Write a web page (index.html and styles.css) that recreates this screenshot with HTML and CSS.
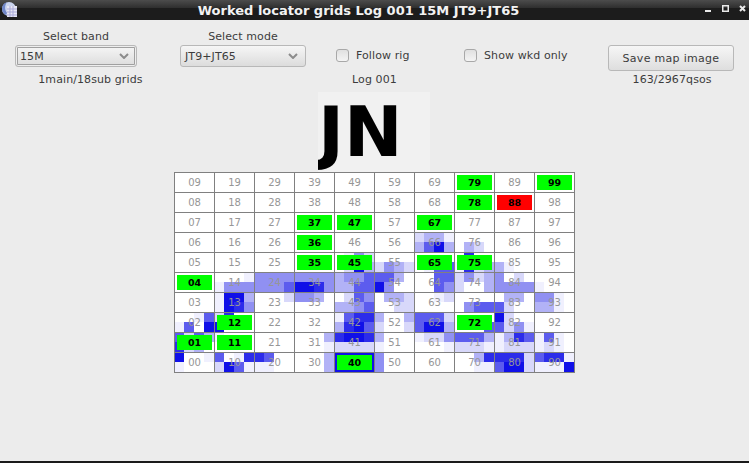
FILE: index.html
```html
<!DOCTYPE html>
<html lang="en">
<head>
    <meta charset="UTF-8">
    <title>Worked locator grids</title>
    <link rel="stylesheet" href="styles.css">
</head>
<body>
    <header class="titlebar">
        <svg class="app-icon" width="16" height="16" viewBox="0 0 16 16">
            <circle cx="8" cy="8" r="7" fill="#c9d3ee"/>
            <path d="M1 8a7 7 0 0 1 5-6.7C4 4 3 8 6 12l-1 2A7 7 0 0 1 1 8z" fill="#6f86c8"/>
            <rect x="6" y="5" width="10" height="11" fill="#e6e6f4"/>
            <path d="M6 8h10M6 11h10M6 14h10M9 5v11M12 5v11" stroke="#a9a9d8" stroke-width="1"/>
        </svg>
        <span class="title">Worked locator grids Log 001 15M JT9+JT65</span>
        <div class="win-buttons">
            <svg width="7" height="7" viewBox="0 0 7 7"><rect x="0" y="5" width="6" height="2" fill="#e8e8e8"/></svg>
            <svg width="7" height="7" viewBox="0 0 7 7"><rect x="0.75" y="0.75" width="5.5" height="5.5" fill="none" stroke="#e8e8e8" stroke-width="1.5"/></svg>
            <svg width="7" height="7" viewBox="0 0 7 7"><path d="M1 1l5 5M6 1l-5 5" stroke="#e8e8e8" stroke-width="2"/></svg>
        </div>
    </header>

    <main class="content">
        <section class="controls">
            <div class="col col-band">
                <label class="caption">Select band</label>
                <div class="combo combo-focus">
                    <span>15M</span>
                    <svg width="10" height="6" viewBox="0 0 10 6"><path d="M1 1l4 4 4-4" fill="none" stroke="#8c8c8c" stroke-width="2"/></svg>
                </div>
            </div>
            <div class="col col-mode">
                <label class="caption">Select mode</label>
                <div class="combo">
                    <span>JT9+JT65</span>
                    <svg width="10" height="6" viewBox="0 0 10 6"><path d="M1 1l4 4 4-4" fill="none" stroke="#8c8c8c" stroke-width="2"/></svg>
                </div>
            </div>
            <div class="check check-rig"><span class="box"></span>Follow rig</div>
            <div class="check check-wkd"><span class="box"></span>Show wkd only</div>
            <button class="save" type="button">Save map image</button>
        </section>

        <section class="status">
            <span class="stat-grids">1main/18sub grids</span>
            <span class="stat-log">Log 001</span>
            <span class="stat-qsos">163/2967qsos</span>
        </section>

        <div class="field-name"><span>JN</span></div>
        <div id="grid" class="grid"></div>
    </main>
    <div class="bottom-edge"></div>

    <script src="app.js"></script>
</body>
</html>
```

FILE: styles.css
```css
html, body {
    margin: 0;
    height: 463px;
    overflow: hidden;
}
body {
    font-family: "DejaVu Sans", sans-serif;
    font-size: 11px;
    letter-spacing: 0.1px;
    color: #3c3c3c;
    background-color: #ececec;
    display: flex;
    flex-direction: column;
}
.titlebar {
    height: 20px;
    flex: none;
    display: flex;
    align-items: center;
    justify-content: center;
    position: relative;
    background: linear-gradient(#4c4c4c 0, #2e2e2e 8px, #1c1c1c 8px, #1c1c1c 100%);
}
.title {
    color: #f2f2f2;
    font-weight: bold;
    font-size: 13px;
    letter-spacing: 0;
    margin-right: 32px;
}
.app-icon {
    position: absolute;
    left: 1px;
    top: 1px;
}
.win-buttons {
    position: absolute;
    right: 3px;
    top: 5px;
    display: flex;
    gap: 10px;
}
.content {
    flex: 1;
    display: flex;
    flex-direction: column;
    align-items: flex-start;
}
.controls {
    display: flex;
    align-items: flex-start;
    padding: 10px 0 0 15px;
    height: 43px;
}
.col {
    display: flex;
    flex-direction: column;
    gap: 2px;
}
.caption {
    display: block;
    text-align: center;
    height: 13px;
    line-height: 13px;
}
.col-band {
    width: 122px;
    margin-right: 43px;
}
.col-mode {
    width: 126px;
    margin-right: 30px;
}
.combo {
    height: 22px;
    box-sizing: border-box;
    display: flex;
    align-items: center;
    justify-content: space-between;
    padding: 0 7px 0 4px;
    border: 1px solid #b8b8b8;
    border-radius: 3px;
    background: linear-gradient(#f6f6f6, #dcdcdc);
}
.combo-focus {
    box-shadow: inset 0 0 0 1px #eeeeee, inset 0 0 0 2px #a0a0a0;
}
.check {
    display: flex;
    align-items: center;
    gap: 7px;
    height: 15px;
    margin-top: 18px;
}
.check-rig {
    width: 128px;
}
.check-wkd {
    width: 144px;
}
.box {
    width: 11px;
    height: 11px;
    border: 1px solid #a8a8a8;
    border-radius: 3px;
    background: linear-gradient(#e0e0e0, #f4f4f4);
}
.save {
    width: 126px;
    height: 26px;
    margin-top: 15px;
    padding: 0;
    border: 1px solid #b8b8b8;
    border-radius: 3px;
    background: linear-gradient(#f6f6f6, #dedede);
    font-family: inherit;
    font-size: 11px;
    letter-spacing: 0.3px;
    color: #3c3c3c;
}
.status {
    display: flex;
    padding: 0 0 0 15px;
    height: 19px;
    line-height: 13px;
    width: 734px;
    box-sizing: border-box;
}
.status span {
    text-align: center;
}
.stat-grids {
    width: 151px;
}
.stat-log {
    width: 418px;
}
.stat-qsos {
    width: 124px;
    margin-left: 27px;
}
.field-name {
    width: 112px;
    height: 80px;
    margin-left: 318px;
    background-color: #f1f1f1;
    overflow: hidden;
    color: #000000;
    font-size: 70px;
    font-weight: bold;
    line-height: 80px;
    letter-spacing: 0;
    white-space: nowrap;
}
.grid {
    margin-left: 174px;
    display: grid;
    grid-template-columns: repeat(10, 40px);
    grid-auto-rows: 20px;
    border-right: 1px solid #808080;
    border-bottom: 1px solid #808080;
}
.cell {
    position: relative;
    display: grid;
    background-color: #ffffff;
}
.cell::after {
    content: "";
    position: absolute;
    inset: 0;
    border-left: 1px solid #808080;
    border-top: 1px solid #808080;
}
.heat, .label {
    grid-area: 1 / 1;
}
.heat {
    display: grid;
    grid-template-columns: repeat(4, 10px);
    grid-auto-rows: 10px;
}
.label {
    margin: 3px 2px 2px 3px;
    display: flex;
    align-items: center;
    justify-content: center;
    font-size: 10px;
    letter-spacing: 0;
    color: #969696;
    z-index: 1;
}
.worked, .flagged {
    color: #000000;
    font-size: 9.5px;
    font-weight: bold;
}
.worked {
    background-color: #00ff00;
}
.flagged {
    background-color: #ff0000;
}
.h1 { background-color: #f0f0fe; }
.h2 { background-color: #d8d8fa; }
.h3 { background-color: #b2b2f6; }
.h4 { background-color: #9090f2; }
.h5 { background-color: #5c5cee; }
.h6 { background-color: #2c2cea; }
.h7 { background-color: #1010e8; }
.bottom-edge {
    height: 2px;
    flex: none;
    background-color: #1a1a1a;
}
```

FILE: app.js
```js
// worked squares, 88 is the one flagged red
const worked = ['79', '99', '78', '37', '47', '67', '36', '35', '45', '65', '75', '04', '12', '72', '01', '11', '40'];
const flagged = ['88'];

// qso density per sub square: 8 digits, two rows of four blocks
const heat = {
    '14': '00011444', '24': '44444445', '34': '44447764', '44': '34453355', '54': '55307400', '64': '00550054', '74': '24232003', '84': '40204444', '94': '00001000',
    '13': '17731764', '23': '00020000', '33': '44300000', '43': '02543345', '53': '03320022', '63': '00120000', '73': '00000455', '83': '03305200', '93': '44103310',
    '02': '00151507', '12': '26007000', '42': '15663675', '52': '30032002', '62': '55525773', '72': '00000005', '82': '72005241',
    '01': '52536230', '11': '10000000', '31': '00030001', '41': '67762222', '51': '30001000', '61': '12240001', '71': '55532221', '81': '13651222', '91': '15101210',
    '00': '70011000', '10': '50162751', '20': '65001100', '30': '00030003', '40': '77777777', '50': '40004000', '70': '00360011', '80': '66625772', '90': '56611117',
    '45': '01420273', '55': '00002432', '65': '00000155', '75': '06001623', '85': '00003100',
    '66': '23313573', '76': '00000320'
};

const grid = document.getElementById('grid');

for (let row = 9; row >= 0; row--) {
    for (let col = 0; col < 10; col++) {
        const name = `${col}${row}`;
        const cell = document.createElement('div');
        cell.className = 'cell';

        const blocks = document.createElement('div');
        blocks.className = 'heat';
        const levels = heat[name] || '00000000';
        for (const level of levels) {
            const block = document.createElement('i');
            if (level !== '0') block.className = `h${level}`;
            blocks.appendChild(block);
        }

        const label = document.createElement('span');
        label.className = 'label';
        if (worked.includes(name)) label.classList.add('worked');
        if (flagged.includes(name)) label.classList.add('flagged');
        label.textContent = name;

        cell.append(blocks, label);
        grid.appendChild(cell);
    }
}
```
